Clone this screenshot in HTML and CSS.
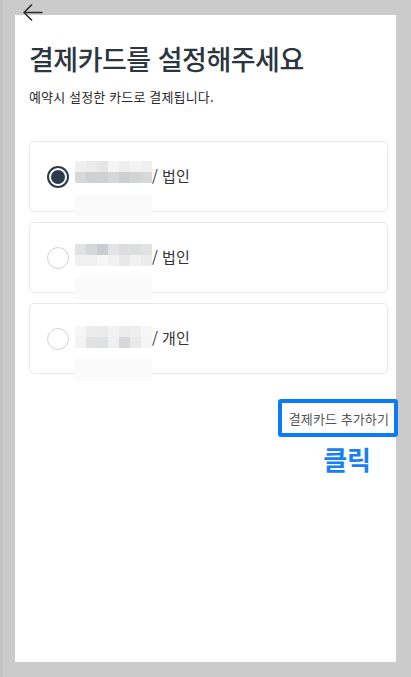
FILE: index.html
```html
<!DOCTYPE html>
<html lang="ko">
<head>
<meta charset="utf-8">
<link rel="stylesheet" href="styles.css">
</head>
<body>
<div class="page">
  <div class="panel">
    <svg class="back" width="20" height="18" viewBox="0 0 20 18">
      <path d="M1 8.5 H19 M8.5 1 L1 8.5 L8.5 16" fill="none" stroke="#2b2b2b" stroke-width="1.6" stroke-linecap="round" stroke-linejoin="round"/>
    </svg>
    <h1 class="title">결제카드를 설정해주세요</h1>
    <p class="subtitle">예약시 설정한 카드로 결제됩니다.</p>

    <div class="cards">
      <div class="card">
        <span class="radio radio-on"></span>
        <span class="mosaic m1">
          <i style="background:#f0f0f0"></i><i style="background:#ebebeb"></i><i style="background:#e6e6e6"></i><i style="background:#f5f5f5"></i><i style="background:#eeeeee"></i><i style="background:#f3f3f3"></i><i style="background:#f0f0f0"></i>
          <i style="background:#d7d8d9"></i><i style="background:#cfd0d2"></i><i style="background:#d0d1d3"></i><i style="background:#d5d7d9"></i><i style="background:#cdcfd1"></i><i style="background:#d3d4d5"></i><i style="background:#d8d8d8"></i>
        </span>
        <span class="kind">/ 법인</span>
      </div>
      <div class="card">
        <span class="radio"></span>
        <span class="mosaic m2">
          <i style="background:#e1e2e3"></i><i style="background:#d5d7d9"></i><i style="background:#c9cdd1"></i><i style="background:#e4e4e5"></i><i style="background:#dcdddf"></i><i style="background:#dddede"></i><i style="background:#e2e3e3"></i>
          <i style="background:#f0f0f0"></i><i style="background:#f0f0f0"></i><i style="background:#f6f6f6"></i><i style="background:#f1f1f1"></i><i style="background:#e8e8e9"></i><i style="background:#f1f1f1"></i><i style="background:#ebebeb"></i>
        </span>
        <span class="kind">/ 법인</span>
      </div>
      <div class="card">
        <span class="radio"></span>
        <span class="mosaic m3">
          <i style="background:#f7f7f7"></i><i style="background:#ececec"></i><i style="background:#ebebeb"></i><i style="background:#f2f2f2"></i><i style="background:#ececec"></i><i style="background:#efefef"></i><i style="background:#f6f6f6"></i>
          <i style="background:#f3f3f3"></i><i style="background:#e2e2e3"></i><i style="background:#e0e1e2"></i><i style="background:#f0f0f0"></i><i style="background:#d6d7d9"></i><i style="background:#e9e9ea"></i><i style="background:#f5f5f5"></i>
        </span>
        <span class="kind">/ 개인</span>
      </div>
    </div>

    <div class="add-area">
      <div class="add-btn">결제카드 추가하기</div>
      <div class="click">클릭</div>
    </div>
  </div>
</div>
</body>
</html>
```

FILE: styles.css
```css
html, body {
  margin: 0;
  padding: 0;
  background: #cbcbcb;
  height: 100%;
  overflow: hidden;
}

body {
  font-family: "Noto Sans CJK KR", "Noto Sans", sans-serif;
  color: #222;
}

.page {
  border-left: 3px solid #c3c3c3;
  padding: 15px 0 0 12px;
  box-sizing: border-box;
  height: 100%;
}

.panel {
  position: relative;
  width: 381px;
  height: 647px;
  background: #fff;
  box-sizing: border-box;
  padding: 26px 8px 0 14px;
}

.back {
  position: absolute;
  left: 8px;
  top: -11px;
}

.title {
  margin: 0;
  font-size: 27px;
  line-height: 36px;
  font-weight: 500;
  letter-spacing: -0.5px;
  color: #2c3540;
}

.subtitle {
  margin: 11px 0 0;
  font-size: 13px;
  line-height: 18px;
  color: #2a2a2a;
  letter-spacing: 0.15px;
}

.cards {
  margin-top: 35px;
  display: flex;
  flex-direction: column;
  gap: 10px;
}

.card {
  height: 71px;
  box-sizing: border-box;
  border: 1px solid #e8e8e8;
  border-radius: 5px;
  display: flex;
  align-items: center;
  padding-left: 17px;
}

.radio {
  width: 22px;
  height: 22px;
  box-sizing: border-box;
  border: 1.5px solid #d3d3d3;
  border-radius: 50%;
  flex: none;
  position: relative;
}

.radio-on {
  border: 2px solid #2c3a4a;
}

.radio-on::after {
  content: "";
  position: absolute;
  left: 2px;
  top: 2px;
  width: 14px;
  height: 14px;
  border-radius: 50%;
  background: #2c3a4a;
}

.mosaic {
  margin-left: 6px;
  display: grid;
  grid-template-columns: repeat(7, 11px);
  grid-auto-rows: 11px;
  position: relative;
}

.mosaic i {
  display: block;
}

.mosaic::after {
  content: "";
  position: absolute;
  left: 0;
  top: 33px;
  width: 77px;
  height: 22px;
  background: #fafafa;
}

.m1 { top: -5px; }
.m2 { top: -3px; }
.m3 { top: -2px; }

.kind {
  font-size: 15px;
  color: #333;
  margin-left: 0;
  position: relative;
  top: -1px;
}

.add-area {
  margin-top: 25px;
  margin-right: -10px;
  display: flex;
  flex-direction: column;
  align-items: flex-end;
}

.add-btn {
  border: 4px solid #0a7cf7;
  border-radius: 3px;
  padding: 0 5px 0 7px;
  height: 38px;
  box-sizing: border-box;
  display: flex;
  align-items: center;
  font-size: 13px;
  color: #555;
  letter-spacing: 0.1px;
}

.click {
  margin-top: 7px;
  margin-right: 27px;
  font-size: 26px;
  line-height: 30px;
  font-weight: 700;
  color: #1681f5;
}
```
